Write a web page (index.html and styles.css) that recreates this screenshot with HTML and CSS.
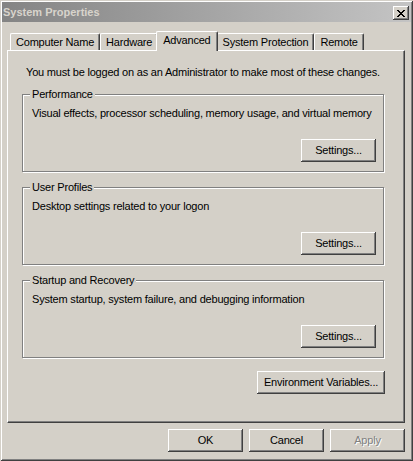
FILE: index.html
```html
<!DOCTYPE html>
<html>
<head>
<meta charset="utf-8">
<title>System Properties</title>
<link rel="stylesheet" href="styles.css">
</head>
<body>
<div class="window">
  <div class="titlebar">
    <span class="title">System Properties</span>
    <button class="close" aria-label="Close">
      <svg width="8" height="7" viewBox="0 0 8 7" shape-rendering="crispEdges">
        <path fill="#000" d="M0 0h2v1h-2z M6 0h2v1h-2z M1 1h2v1h-2z M5 1h2v1h-2z M2 2h4v1h-4z M3 3h2v1h-2z M2 4h4v1h-4z M1 5h2v1h-2z M5 5h2v1h-2z M0 6h2v1h-2z M6 6h2v1h-2z"/>
      </svg>
    </button>
  </div>
  <div class="tabs">
    <div class="tab">Computer Name</div>
    <div class="tab">Hardware</div>
    <div class="tab active">Advanced</div>
    <div class="tab">System Protection</div>
    <div class="tab">Remote</div>
  </div>
  <div class="panel">
    <p class="intro">You must be logged on as an Administrator to make most of these changes.</p>
    <fieldset class="group">
      <legend>Performance</legend>
      <div class="group-body">
        <p class="desc">Visual effects, processor scheduling, memory usage, and virtual memory</p>
        <button class="btn">Settings...</button>
      </div>
    </fieldset>
    <fieldset class="group">
      <legend>User Profiles</legend>
      <div class="group-body">
        <p class="desc">Desktop settings related to your logon</p>
        <button class="btn">Settings...</button>
      </div>
    </fieldset>
    <fieldset class="group">
      <legend>Startup and Recovery</legend>
      <div class="group-body">
        <p class="desc">System startup, system failure, and debugging information</p>
        <button class="btn">Settings...</button>
      </div>
    </fieldset>
    <button class="btn btn-wide">Environment Variables...</button>
  </div>
  <div class="footer">
    <button class="btn">OK</button>
    <button class="btn">Cancel</button>
    <button class="btn" disabled>Apply</button>
  </div>
</div>
</body>
</html>
```
FILE: styles.css
```css
* { box-sizing: border-box; }

body {
  margin: 0;
  background: #d4d0c8;
}

.window {
  width: 413px;
  height: 461px;
  background: #d4d0c8;
  box-shadow: inset 1px 1px #d4d0c8, inset -1px -1px #404040, inset 2px 2px #fff, inset -2px -2px #808080;
  display: flex;
  flex-direction: column;
  font-family: "Liberation Sans", Arial, sans-serif;
  font-size: 11px;
  line-height: 13px;
  letter-spacing: -0.2px;
  color: #000;
}

.titlebar {
  margin: 2px 2px 0;
  height: 20px;
  background: linear-gradient(to right, #848484, #c4c4c4);
  display: flex;
  align-items: flex-start;
  justify-content: space-between;
  padding: 0 2px 0 1px;
}

.title {
  font-weight: bold;
  color: #d8d4cc;
  letter-spacing: 0;
  line-height: 20px;
}

.close {
  width: 16px;
  height: 14px;
  margin-top: 4px;
  padding: 0;
  border: none;
  background: #d4d0c8;
  box-shadow: inset -1px -1px #404040, inset 1px 1px #fff, inset -2px -2px #808080;
  display: flex;
  align-items: center;
  justify-content: center;
}

.close svg { display: block; margin-left: -1px; }

.tabs {
  display: flex;
  align-items: flex-end;
  padding: 9px 0 0 10px;
  margin-bottom: -1px;
  position: relative;
  z-index: 1;
}

.tab {
  height: 17px;
  margin-bottom: 1px;
  padding: 2px 5px 0;
  border-top: 1px solid #fff;
  border-left: 1px solid #fff;
  border-right: 1px solid #404040;
  border-radius: 2px 2px 0 0;
  box-shadow: inset -1px 0 #808080;
  background: #d4d0c8;
  white-space: nowrap;
}

.tab.active {
  height: 20px;
  margin-bottom: 0;
  margin-left: -2px;
  margin-right: -1px;
  padding: 2px 6px 0;
  position: relative;
  z-index: 2;
}

.panel {
  margin: 0 8px 0 7px;
  height: 373px;
  border-top: 1px solid #fff;
  border-left: 1px solid #fff;
  border-right: 1px solid #404040;
  border-bottom: 1px solid #404040;
  box-shadow: inset -1px -1px #808080;
  padding: 15px 20px 0 14px;
  display: flex;
  flex-direction: column;
}

.intro {
  margin: 0 0 9px 4px;
}

.group {
  margin: 0 0 9px;
  padding: 6px 7px 9px 9px;
  border: 1px solid #808080;
  box-shadow: inset 1px 1px #fff, 1px 1px #fff;
  min-width: 0;
}

.group legend {
  padding: 0 2px;
  margin-left: -2px;
  background: #d4d0c8;
  line-height: 13px;
}

.group-body {
  display: flex;
  flex-direction: column;
}

.desc {
  margin: 0 0 19px;
}

.btn {
  width: 75px;
  height: 23px;
  padding: 0;
  border: none;
  background: #d4d0c8;
  box-shadow: inset -1px -1px #404040, inset 1px 1px #fff, inset -2px -2px #808080;
  font: inherit;
  letter-spacing: inherit;
  color: #000;
  align-self: flex-end;
}

.btn:disabled {
  color: #808080;
  text-shadow: 1px 1px #fff;
}

.btn-wide {
  width: 128px;
  margin-top: 4px;
  margin-right: -1px;
}

.footer {
  display: flex;
  justify-content: flex-end;
  gap: 6px;
  padding: 6px 8px 0 0;
}
```
